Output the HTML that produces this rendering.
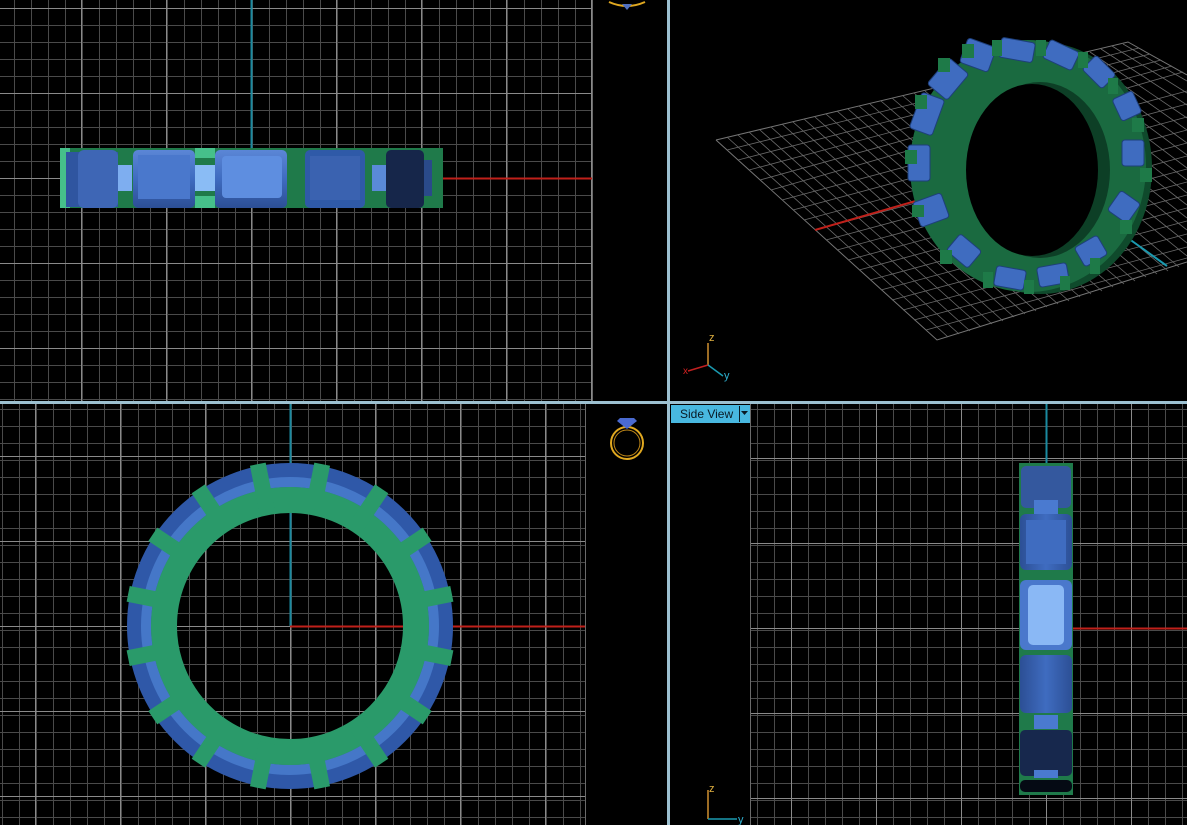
<!DOCTYPE html>
<html><head><meta charset="utf-8"><style>
html,body{margin:0;padding:0;background:#000;width:1187px;height:825px;overflow:hidden;font-family:"Liberation Sans",sans-serif}
svg{display:block}
</style></head><body>
<svg width="1187" height="825" viewBox="0 0 1187 825" xmlns="http://www.w3.org/2000/svg">
<defs>
<pattern id="gTL" x="-3" y="-9" width="17" height="17" patternUnits="userSpaceOnUse"><path d="M0.5 0V17M0 0.5H17" stroke="#4a4a4a" stroke-width="1"/></pattern>
<pattern id="GTL" x="-4" y="8" width="85" height="85" patternUnits="userSpaceOnUse"><path d="M0.5 0V85M0 0.5H85" stroke="#8a8a8a" stroke-width="1"/></pattern>
<pattern id="gBL" x="2" y="1" width="17" height="17" patternUnits="userSpaceOnUse"><path d="M0.5 0V17M0 0.5H17" stroke="#4a4a4a" stroke-width="1"/></pattern>
<pattern id="GBL" x="35" y="31" width="85" height="85" patternUnits="userSpaceOnUse"><path d="M0.5 0V85M0 0.5H85" stroke="#8a8a8a" stroke-width="1"/></pattern>
<pattern id="gBR" x="9" y="1" width="17" height="17" patternUnits="userSpaceOnUse"><path d="M0.5 0V17M0 0.5H17" stroke="#4a4a4a" stroke-width="1"/></pattern>
<pattern id="GBR" x="26" y="33" width="85" height="85" patternUnits="userSpaceOnUse"><path d="M0.5 0V85M0 0.5H85" stroke="#8a8a8a" stroke-width="1"/></pattern>
<linearGradient id="stH" x1="0" y1="0" x2="0" y2="1"><stop offset="0" stop-color="#5b86d6"/><stop offset="0.5" stop-color="#3f6cc0"/><stop offset="1" stop-color="#2c4f95"/></linearGradient>
<linearGradient id="stV" x1="0" y1="0" x2="1" y2="0"><stop offset="0" stop-color="#2c4f95"/><stop offset="0.5" stop-color="#3f6cc0"/><stop offset="1" stop-color="#2c4f95"/></linearGradient>
</defs>

<!-- TOP LEFT -->
<rect x="0" y="0" width="592" height="401" fill="url(#gTL)"/>
<rect x="0" y="0" width="592" height="401" fill="url(#GTL)"/>
<line x1="592.5" y1="0" x2="592.5" y2="401" stroke="#6a6a6a"/>
<line x1="251.5" y1="0" x2="251.5" y2="150" stroke="#1a8aa0" stroke-width="2"/>
<line x1="440" y1="178.5" x2="592" y2="178.5" stroke="#c0201a" stroke-width="2"/>
<g>
<rect x="60" y="148" width="383" height="60" fill="#1f7a4a"/>
<rect x="60" y="148" width="10" height="60" fill="#46c08a"/>
<rect x="66" y="152" width="52" height="55" fill="#2f55a0"/>
<rect x="78" y="150" width="40" height="58" rx="6" fill="#3e66b5"/>
<rect x="118" y="165" width="14" height="26" fill="#7eaef0"/>
<rect x="133" y="150" width="62" height="58" rx="5" fill="url(#stH)"/>
<rect x="138" y="155" width="52" height="44" fill="#4a78cc"/>
<rect x="195" y="165" width="20" height="26" fill="#8abcf5"/>
<rect x="195" y="148" width="20" height="10" fill="#46c08a"/>
<rect x="195" y="196" width="20" height="12" fill="#46c08a"/>
<rect x="215" y="150" width="72" height="58" rx="5" fill="url(#stH)"/>
<rect x="222" y="156" width="60" height="42" rx="4" fill="#5e8ee0"/>
<rect x="305" y="150" width="60" height="58" rx="5" fill="#2f5aa8"/>
<rect x="310" y="156" width="50" height="44" fill="#3a62b0"/>
<rect x="372" y="165" width="14" height="26" fill="#5a8ad8"/>
<rect x="386" y="150" width="38" height="58" rx="5" fill="#16264a"/>
<rect x="424" y="160" width="8" height="36" fill="#2a4a8a"/>
<rect x="433" y="148" width="10" height="60" fill="#1f7a4a"/>
</g>

<!-- top small icon -->
<path d="M609 2 Q627 10 645 2" stroke="#e0a820" stroke-width="2" fill="none"/>
<path d="M622 4 L632 4 L627 10 Z" fill="#5070c0"/>

<!-- TOP RIGHT perspective grid -->
<g stroke="#8a8a8a" stroke-width="1" opacity="0.85">
<path d="M716 140 L1128 42 L1187 75 M716 140 L937 340 L1187 262"/>
</g>
<g stroke="#6a6a6a" stroke-width="0.8">
<path d="M727 137L948 337M738 135L959 334M749 132L970 331M760 130L981 327M771 127L992 324M782 124L1003 321M793 122L1014 317M804 119L1025 314M815 117L1036 311M826 114L1047 307M837 111L1058 304M848 109L1069 301M859 106L1080 297M870 104L1091 294M881 101L1102 291M892 98L1113 287M903 96L1124 284M914 93L1135 281M925 91L1146 277M936 88L1157 274M947 85L1168 271M958 83L1179 267M969 80L1187 256M980 78L1187 243M991 75L1187 230M1002 72L1187 218M1013 70L1187 205M1024 67L1187 193M1035 65L1187 180M1046 62L1187 168M1057 59L1187 155M1068 57L1187 143M1079 54L1187 130M1090 52L1187 118M1101 49L1187 105M1112 46L1187 93M1123 44L1187 81"/>
<path d="M727 150L1139 48M738 160L1150 54M749 170L1161 60M760 180L1172 66M771 190L1183 72M782 200L1187 91M793 210L1187 104M804 220L1187 117M815 230L1187 130M826 240L1187 143M837 250L1187 156M848 260L1187 169M859 270L1187 182M870 280L1187 195M881 290L1187 208M892 300L1187 221M903 310L1187 234M914 320L1187 247M926 330L1187 258"/>
</g>
<line x1="815" y1="230" x2="1030" y2="168" stroke="#c0201a" stroke-width="2"/>
<line x1="1030" y1="168" x2="1167" y2="266" stroke="#1a9ab0" stroke-width="2"/>
<!-- ring 3D -->
<ellipse cx="1040" cy="168" rx="112" ry="126" fill="#0f4a2c"/>
<ellipse cx="1028" cy="166" rx="118" ry="126" fill="#1a6a40"/>
<ellipse cx="1040" cy="170" rx="70" ry="88" fill="#0d3f26"/>
<ellipse cx="1032" cy="170" rx="66" ry="86" fill="#000"/>
<g fill="#3f6cc0" stroke="#1e3f7a" stroke-width="1">
<rect x="1000" y="40" width="34" height="20" rx="3" transform="rotate(10 1017 50)"/>
<rect x="1045" y="45" width="32" height="20" rx="3" transform="rotate(25 1061 55)"/>
<rect x="1085" y="62" width="28" height="20" rx="3" transform="rotate(45 1099 72)"/>
<rect x="1115" y="95" width="24" height="22" rx="3" transform="rotate(65 1127 106)"/>
<rect x="1122" y="140" width="22" height="26" rx="3"/>
<rect x="1112" y="195" width="24" height="24" rx="3" transform="rotate(-55 1124 207)"/>
<rect x="1078" y="240" width="26" height="22" rx="3" transform="rotate(-30 1091 251)"/>
<rect x="1038" y="265" width="30" height="20" rx="3" transform="rotate(-10 1053 275)"/>
<rect x="995" y="268" width="30" height="20" rx="3" transform="rotate(10 1010 278)"/>
<rect x="950" y="240" width="28" height="22" rx="3" transform="rotate(40 964 251)"/>
<rect x="918" y="195" width="26" height="30" rx="3" transform="rotate(70 931 210)"/>
<rect x="908" y="145" width="22" height="36" rx="3"/>
<rect x="915" y="95" width="24" height="38" rx="3" transform="rotate(20 927 114)"/>
<rect x="935" y="62" width="26" height="34" rx="3" transform="rotate(40 948 79)"/>
<rect x="963" y="42" width="30" height="26" rx="3" transform="rotate(20 978 55)"/>
</g>
<g fill="#1e7a48">
<rect x="992" y="40" width="10" height="16"/><rect x="1036" y="40" width="10" height="16"/><rect x="1078" y="52" width="10" height="16"/>
<rect x="1108" y="78" width="10" height="16"/><rect x="1132" y="118" width="12" height="14"/><rect x="1140" y="168" width="12" height="14"/>
<rect x="1120" y="220" width="12" height="14"/><rect x="1090" y="258" width="10" height="16"/><rect x="1060" y="276" width="10" height="14"/>
<rect x="1024" y="280" width="10" height="14"/><rect x="983" y="272" width="10" height="16"/><rect x="940" y="250" width="12" height="14"/>
<rect x="912" y="205" width="12" height="12"/><rect x="905" y="150" width="12" height="14"/><rect x="915" y="95" width="12" height="14"/><rect x="938" y="58" width="12" height="14"/><rect x="962" y="44" width="12" height="14"/>
</g>
<!-- axes icon TR -->
<line x1="708" y1="343" x2="708" y2="365" stroke="#d09030" stroke-width="1.5"/>
<line x1="708" y1="365" x2="688" y2="371" stroke="#c02020" stroke-width="1.5"/>
<line x1="708" y1="365" x2="723" y2="376" stroke="#1a9ab0" stroke-width="1.5"/>
<text x="709" y="341" fill="#e0b040" font-size="11">z</text>
<text x="683" y="374" fill="#d02020" font-size="10">x</text>
<text x="724" y="379" fill="#30b0d0" font-size="11">y</text>

<!-- dividers -->
<rect x="667" y="0" width="3" height="825" fill="#9cc0d0"/>
<rect x="0" y="401" width="1187" height="3" fill="#9cc0d0"/>

<!-- BOTTOM LEFT -->
<rect x="0" y="404" width="585" height="421" fill="url(#gBL)"/>
<rect x="0" y="404" width="585" height="421" fill="url(#GBL)"/>
<line x1="585.5" y1="404" x2="585.5" y2="825" stroke="#6a6a6a"/>
<line x1="290.5" y1="404" x2="290.5" y2="626" stroke="#1a8aa0" stroke-width="2"/>
<line x1="290" y1="626.5" x2="585" y2="626.5" stroke="#c0201a" stroke-width="2"/>
<circle cx="290" cy="626" r="150" fill="none" stroke="#2f58a8" stroke-width="26"/>
<circle cx="290" cy="626" r="144" fill="none" stroke="#4577c8" stroke-width="10"/>
<circle cx="290" cy="626" r="126" fill="none" stroke="#2a9a6a" stroke-width="26"/>
<g fill="#2a9a6a">
<rect x="282" y="461" width="16" height="46" transform="rotate(11.25 290 626)"/>
<rect x="282" y="461" width="16" height="46" transform="rotate(33.75 290 626)"/>
<rect x="282" y="461" width="16" height="46" transform="rotate(56.25 290 626)"/>
<rect x="282" y="461" width="16" height="46" transform="rotate(78.75 290 626)"/>
<rect x="282" y="461" width="16" height="46" transform="rotate(101.25 290 626)"/>
<rect x="282" y="461" width="16" height="46" transform="rotate(123.75 290 626)"/>
<rect x="282" y="461" width="16" height="46" transform="rotate(146.25 290 626)"/>
<rect x="282" y="461" width="16" height="46" transform="rotate(168.75 290 626)"/>
<rect x="282" y="461" width="16" height="46" transform="rotate(191.25 290 626)"/>
<rect x="282" y="461" width="16" height="46" transform="rotate(213.75 290 626)"/>
<rect x="282" y="461" width="16" height="46" transform="rotate(236.25 290 626)"/>
<rect x="282" y="461" width="16" height="46" transform="rotate(258.75 290 626)"/>
<rect x="282" y="461" width="16" height="46" transform="rotate(281.25 290 626)"/>
<rect x="282" y="461" width="16" height="46" transform="rotate(303.75 290 626)"/>
<rect x="282" y="461" width="16" height="46" transform="rotate(326.25 290 626)"/>
<rect x="282" y="461" width="16" height="46" transform="rotate(348.75 290 626)"/>
</g>
<!-- ring icon BL -->
<circle cx="627" cy="443" r="16" fill="none" stroke="#e0a820" stroke-width="2"/>
<circle cx="627" cy="443" r="13" fill="none" stroke="#c08818" stroke-width="1"/>
<path d="M620 418 L634 418 L637 421 L627 429 L617 421 Z" fill="#4a6ad0"/>

<!-- BOTTOM RIGHT -->
<rect x="750" y="404" width="437" height="421" fill="url(#gBR)"/>
<rect x="750" y="404" width="437" height="421" fill="url(#GBR)"/>
<line x1="750.5" y1="404" x2="750.5" y2="825" stroke="#6a6a6a"/>
<line x1="1046.5" y1="404" x2="1046.5" y2="465" stroke="#1a8aa0" stroke-width="2"/>
<line x1="1073" y1="628.5" x2="1187" y2="628.5" stroke="#c0201a" stroke-width="2"/>
<g>
<rect x="1019" y="463" width="54" height="332" fill="#1f7a4a"/>
<rect x="1021" y="466" width="50" height="42" rx="5" fill="#34589e"/>
<rect x="1034" y="500" width="24" height="14" fill="#4a7ad0"/>
<rect x="1020" y="514" width="52" height="56" rx="6" fill="url(#stV)"/>
<rect x="1026" y="520" width="40" height="44" fill="#3f6cc0"/>
<rect x="1020" y="580" width="52" height="70" rx="6" fill="#4a78cc"/>
<rect x="1028" y="585" width="36" height="60" rx="5" fill="#8ab8f5"/>
<rect x="1020" y="655" width="52" height="58" rx="6" fill="url(#stV)"/>
<rect x="1034" y="715" width="24" height="14" fill="#4a7ad0"/>
<rect x="1020" y="730" width="52" height="46" rx="5" fill="#17284d"/>
<rect x="1034" y="770" width="24" height="8" fill="#4a7ad0"/>
<rect x="1020" y="780" width="52" height="12" rx="5" fill="#050a14"/>
</g>
<line x1="708" y1="790" x2="708" y2="819" stroke="#d09030" stroke-width="1.5"/>
<line x1="708" y1="819" x2="737" y2="819" stroke="#1a9ab0" stroke-width="1.5"/>
<text x="709" y="792" fill="#e0b040" font-size="11">z</text>
<text x="738" y="823" fill="#30b0d0" font-size="11">y</text>

<!-- Side View button -->
<rect x="671" y="405" width="79" height="18" fill="#48b8e0"/>
<text x="680" y="418" fill="#0a1a24" font-size="12">Side View</text>
<line x1="739.5" y1="406" x2="739.5" y2="422" stroke="#0a1a24"/>
<path d="M741 411 L748 411 L744.5 415 Z" fill="#0a1a24"/>
</svg>
</body></html>
